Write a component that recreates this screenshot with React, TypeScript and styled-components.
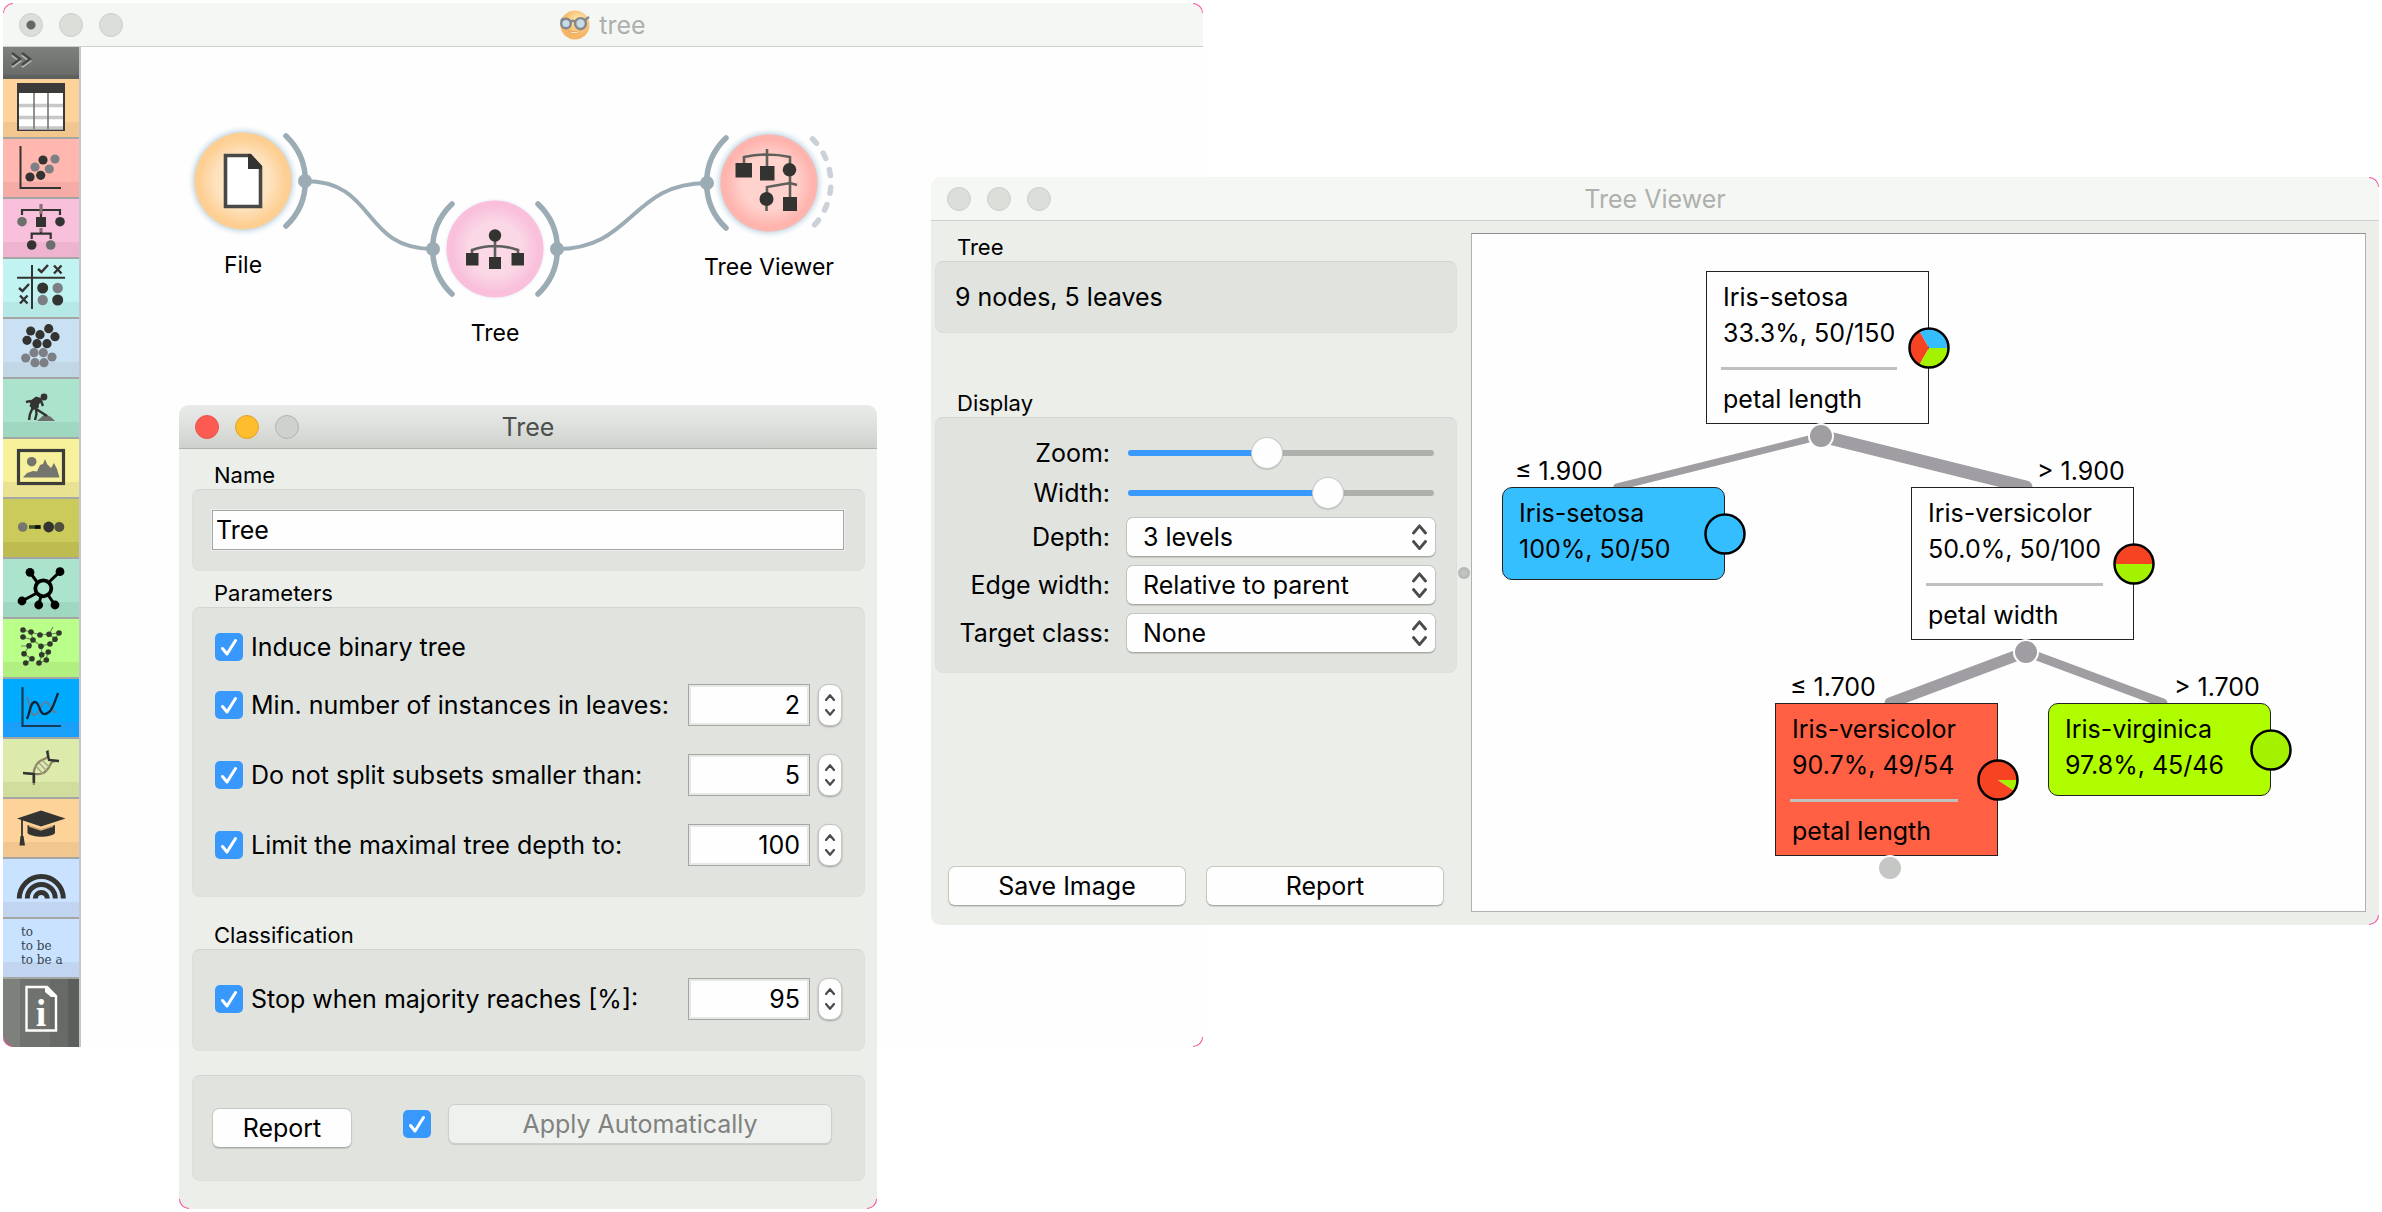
import React, { useState } from "react";
import styled, { createGlobalStyle } from "styled-components";

const GlobalStyle = createGlobalStyle`
  *, *::before, *::after { box-sizing: border-box; }
  body {
    margin: 0;
    background: #fff;
    color: #000;
    font-family: Inter, "Liberation Sans", sans-serif;
    font-size: 25px;
    line-height: 30px;
  }
  button, input, select { font: inherit; color: inherit; margin: 0; }
`;

const ink = "#333432";
const grey = "#7c8084";
const wire = "#9cacb4";

/* ---------- window chrome ---------- */

const Desktop = styled.main`
  position: relative;
  min-height: 100vh;
  overflow: hidden;
`;

const Window = styled.section<{ $left: number; $top: number; $width?: number; $fill?: string }>`
  position: absolute;
  left: ${(p) => p.$left}px;
  top: ${(p) => p.$top}px;
  ${(p) => (p.$width ? `width: ${p.$width}px;` : "right: 3px;")}
  display: flex;
  flex-direction: column;
  border-radius: 10px;
  background: ${(p) => p.$fill ?? "#ebeee9"};
`;

const Corner = styled.span<{ $v: "top" | "bottom"; $h: "left" | "right" }>`
  position: absolute;
  width: 10px;
  height: 10px;
  pointer-events: none;
  ${(p) => p.$v}: 0;
  ${(p) => p.$h}: 0;
  border-${(p) => p.$v}: 1px solid #f2559d;
  border-${(p) => p.$h}: 1px solid #f2559d;
  border-${(p) => p.$v}-${(p) => p.$h}-radius: 10px;
`;

const TitleBar = styled.header<{ $active?: boolean }>`
  display: grid;
  grid-template-columns: 1fr auto 1fr;
  align-items: center;
  height: 44px;
  padding: 0 16px;
  border-radius: 10px 10px 0 0;
  border-bottom: 1px solid ${(p) => (p.$active ? "#b0b2af" : "#cdd0cd")};
  background: ${(p) =>
    p.$active ? "linear-gradient(#e9ebe8, #dfe1de 45%, #cfd1cd)" : "#f5f7f4"};
`;

const Lights = styled.div`
  display: flex;
  gap: 16px;
`;

const Light = styled.button<{ $fill?: string; $edge?: string; $dot?: boolean }>`
  width: 24px;
  height: 24px;
  padding: 0;
  border-radius: 50%;
  border: 1px solid ${(p) => p.$edge ?? "#cccecb"};
  background: ${(p) =>
    p.$dot
      ? "radial-gradient(circle, #666865 0 4px, #dcdeda 5px)"
      : p.$fill ?? "#dcdeda"};
`;

const WindowTitle = styled.h1<{ $active?: boolean }>`
  display: flex;
  align-items: center;
  gap: 9px;
  margin: 0;
  font-size: 25px;
  font-weight: 400;
  line-height: 30px;
  color: ${(p) => (p.$active ? "#4d4f4c" : "#aeb0ad")};
`;

/* ---------- form parts ---------- */

const GroupTitle = styled.h2<{ $gap?: number }>`
  margin: ${(p) => p.$gap ?? 0}px 0 0 22px;
  font-size: 22px;
  font-weight: 400;
  line-height: 28px;
`;

const GroupBox = styled.div<{ $pad: string; $gap?: number }>`
  margin-top: ${(p) => p.$gap ?? 0}px;
  padding: ${(p) => p.$pad};
  border: 1px solid #dddfdb;
  border-top-color: #d2d4d1;
  border-radius: 8px;
  background: #e1e3df;
`;

const PushButton = styled.button`
  height: 40px;
  padding: 0 20px;
  border: 1px solid #c6c8c5;
  border-bottom-color: #a8aaa7;
  border-radius: 7px;
  background: #fefefe;
  box-shadow: 0 1px 1px rgba(0, 0, 0, 0.12);
  line-height: 30px;
  &:disabled {
    color: #80827f;
    background: #eff1ee;
    border-color: #cdcfcc;
  }
`;

const Tick = styled.input.attrs({ type: "checkbox" })`
  appearance: none;
  flex: none;
  width: 28px;
  height: 28px;
  border-radius: 5px;
  border: 1px solid #a9aba8;
  background: #fff;
  &:checked {
    border: none;
    background: #3898fb
      url("data:image/svg+xml,%3Csvg xmlns='http://www.w3.org/2000/svg' viewBox='0 0 28 28' fill='none' stroke='white' stroke-width='3' stroke-linecap='round' stroke-linejoin='round'%3E%3Cpath d='M7.500 15.500 12 21 20.500 7.500'/%3E%3C/svg%3E");
  }
`;

const TickLabel = styled.label`
  display: flex;
  align-items: center;
  gap: 8px;
  flex: 1;
`;

const Row = styled.div<{ $after?: number }>`
  display: flex;
  align-items: center;
  height: 42px;
  margin-bottom: ${(p) => p.$after ?? 0}px;
`;

const TextBox = styled.input`
  display: block;
  width: 100%;
  height: 40px;
  padding: 0 3px;
  border: 1px solid #a4a6a3;
  outline: 1px solid #eceeeb;
  background: #fefefe;
`;

const NumberBox = styled.input`
  width: 122px;
  height: 42px;
  margin-right: 8px;
  padding: 0 9px;
  border: 1px solid #a4a6a3;
  box-shadow: inset 0 0 0 2px #e6e8e5;
  background: #fefefe;
  text-align: right;
`;

const Stepper = styled.div`
  display: flex;
  flex-direction: column;
  width: 24px;
  height: 42px;
  padding: 5px 0;
  border: 1px solid #c3c5c2;
  border-radius: 10px;
  background: #fefefe;
  box-shadow: 0 1px 2px rgba(0, 0, 0, 0.3);
`;

const StepButton = styled.button`
  display: grid;
  place-items: center;
  flex: 1;
  padding: 0;
  border: 0;
  background: none;
`;

const ActionRow = styled.div`
  display: flex;
  align-items: flex-start;
  height: 44px;
`;

const ReportButton = styled(PushButton)`
  align-self: flex-end;
  width: 140px;
  margin-right: 51px;
`;

const ApplyGroup = styled.div`
  display: flex;
  align-items: center;
  gap: 17px;
  flex: 1;
`;

const ApplyButton = styled(PushButton)`
  flex: 1;
`;

function Chevron({ down, w = 10 }: { down?: boolean; w?: number }) {
  return (
    <svg width={w} height={w * 0.7} viewBox="0 0 10 7" aria-hidden="true">
      <path
        d={down ? "M1 1 5 5.800 9 1" : "M1 6 5 1.200 9 6"}
        fill="none"
        stroke="#4a4c4a"
        strokeWidth={w > 12 ? 1.9 : 2.2}
        strokeLinecap="round"
        strokeLinejoin="round"
      />
    </svg>
  );
}

function SpinRow({ label, value, after }: { label: string; value: number; after?: number }) {
  const [n, setN] = useState(value);
  const [on, setOn] = useState(true);
  return (
    <Row $after={after}>
      <TickLabel>
        <Tick checked={on} onChange={() => setOn(!on)} />
        {label}
      </TickLabel>
      <NumberBox
        aria-label={label}
        inputMode="numeric"
        value={n}
        onChange={(e) => setN(Number(e.target.value) || 0)}
      />
      <Stepper>
        <StepButton aria-label="Increase" onClick={() => setN(n + 1)}>
          <Chevron />
        </StepButton>
        <StepButton aria-label="Decrease" onClick={() => setN(n - 1)}>
          <Chevron down />
        </StepButton>
      </Stepper>
    </Row>
  );
}

/* ---------- tree settings dialog ---------- */

const DialogBody = styled.div`
  padding: 12px 12px 28px 13px;
`;

function TreeDialog() {
  return (
    <Window $left={179} $top={405} $width={698}>
      <TitleBar $active>
        <Lights>
          <Light aria-label="Close" $fill="#fc5b52" $edge="#e9564e" />
          <Light aria-label="Minimize" $fill="#fdbd2d" $edge="#dfa32b" />
          <Light aria-label="Zoom" $fill="#cfd1ce" $edge="#b2b4b1" />
        </Lights>
        <WindowTitle $active>Tree</WindowTitle>
      </TitleBar>
      <DialogBody>
        <GroupTitle>Name</GroupTitle>
        <GroupBox $pad="20px 20px 20px 19px">
          <TextBox aria-label="Name" defaultValue="Tree" />
        </GroupBox>
        <GroupTitle $gap={8}>Parameters</GroupTitle>
        <GroupBox $pad="18px 22px 30px">
          <Row $after={16}>
            <TickLabel>
              <Tick defaultChecked />
              Induce binary tree
            </TickLabel>
          </Row>
          <SpinRow label="Min. number of instances in leaves:" value={2} after={28} />
          <SpinRow label="Do not split subsets smaller than:" value={5} after={28} />
          <SpinRow label="Limit the maximal tree depth to:" value={100} />
        </GroupBox>
        <GroupTitle $gap={24}>Classification</GroupTitle>
        <GroupBox $pad="28px 22px 30px">
          <SpinRow label="Stop when majority reaches [%]:" value={95} />
        </GroupBox>
        <GroupBox $pad="28px 32px 32px 19px" $gap={24}>
          <ActionRow>
            <ReportButton>Report</ReportButton>
            <ApplyGroup>
              <Tick aria-label="Apply Automatically" defaultChecked />
              <ApplyButton disabled>Apply Automatically</ApplyButton>
            </ApplyGroup>
          </ActionRow>
        </GroupBox>
      </DialogBody>
      <Corner $v="bottom" $h="left" />
      <Corner $v="bottom" $h="right" />
    </Window>
  );
}

/* ---------- toolbox ---------- */

const MainBody = styled.div`
  display: flex;
`;

const Toolbox = styled.nav`
  width: 78px;
  border-right: 2px solid #c3c6cf;
  border-bottom-left-radius: 10px;
  overflow: hidden;
`;

const ToolboxHeader = styled.button`
  display: block;
  width: 100%;
  height: 32px;
  padding: 5px 0 11px 7px;
  border: 0;
  background: linear-gradient(#7e807d, #6b6d6a 85%, #5f615e 90%);
  text-align: left;
  svg { display: block; }
`;

const Category = styled.button<{ $top: string; $low: string }>`
  display: block;
  width: 100%;
  height: 60px;
  padding: 0;
  border: 0;
  border-bottom: 2px solid #a4a6a4;
  background: linear-gradient(${(p) => p.$top} 0 74%, ${(p) => p.$low} 74%);
  svg { display: block; }
`;

const InfoCategory = styled(Category)`
  height: 68px;
  border-bottom: 0;
  background: linear-gradient(90deg, #7e807c 0 22%, #70726f 22% 62%, #686a67 62% 86%, #5d5f5c 86%);
`;

const Ngrams = styled.span`
  display: block;
  height: 58px;
  padding: 6px 0 0 18px;
  color: #36434d;
  font-family: "DejaVu Serif", serif;
  font-size: 12px;
  line-height: 14px;
  text-align: left;
  white-space: pre;
`;

function Art({ children, h = 58 }: { children: React.ReactNode; h?: number }) {
  return (
    <svg width="76" height={h} viewBox={`0 0 76 ${h}`} aria-hidden="true">
      {children}
    </svg>
  );
}

function Dots({ pts, r, fill }: { pts: number[][]; r: number; fill: string }) {
  return (
    <g fill={fill}>
      {pts.map(([x, y]) => (
        <circle key={`${x}-${y}`} cx={x} cy={y} r={r} />
      ))}
    </g>
  );
}

const tableArt = (
  <Art>
    <rect x="14" y="4" width="48" height="48" fill="#3a3b39" />
    <rect x="16" y="14" width="44" height="36" fill="#fff" />
    <path d="M16 26.500H60M16 38.500H60M16 49H60" stroke="#c8c8c8" strokeWidth="3.500" />
    <path d="M31 14V50M45 14V50" stroke="#767676" strokeWidth="1.600" />
  </Art>
);

const scatterArt = (
  <Art>
    <path d="M17.500 7V49H58" fill="none" stroke={ink} strokeWidth="2" />
    <Dots r={4.6} fill={grey} pts={[[52, 20], [32, 28], [46.3, 30]]} />
    <Dots r={4.6} fill={ink} pts={[[40, 21], [27, 38], [37.7, 36.3]]} />
  </Art>
);

const modelArt = (
  <Art>
    <path
      d="M19 16V11H57V16M38 5V18M28.700 40V34.700H47.700V40M38 29V34"
      fill="none"
      stroke={ink}
      strokeWidth="2.200"
    />
    <path d="M38 5V15M38 29V33" stroke="#8a7173" strokeWidth="3" />
    <rect x="33" y="18" width="10" height="10" fill={ink} />
    <Dots r={4.8} fill={ink} pts={[[57, 22.7], [28.7, 46]]} />
    <Dots r={4.8} fill="#6c6e6c" pts={[[19, 22.7], [47.7, 46]]} />
  </Art>
);

const evaluateArt = (
  <Art>
    <path d="M29 6V50M14 18.700H62" stroke={ink} strokeWidth="2" />
    <path
      d="M35 10 38.500 13 45 6M16 29 19.500 32 26 25M51 6.500 58.500 14.500M58.500 6.500 51 14.500M17 36.500 24.500 44.500M24.500 36.500 17 44.500"
      fill="none"
      stroke={ink}
      strokeWidth="2.400"
    />
    <Dots r={5.5} fill={ink} pts={[[39.7, 29], [54.7, 41]]} />
    <Dots r={5.2} fill={grey} pts={[[54.7, 29], [39.7, 41]]} />
  </Art>
);

const unsupervisedArt = (
  <Art>
    <Dots r={4.6} fill={grey} pts={[[31, 33.7], [40.3, 33.7], [22.7, 39], [49, 38], [32, 43.7], [41, 43.7]]} />
    <Dots r={4.6} fill={ink} pts={[[27.7, 12], [45.7, 9.7], [37, 15.7], [52, 17.7], [24, 21.3], [34, 24.7], [44, 24.7]]} />
  </Art>
);

const diggerArt = (
  <Art>
    <path d="M34 42 42 35 48 38 52 42Z" fill="#6c6e6c" />
    <circle cx="41" cy="18" r="3.400" fill={ink} />
    <path d="M27 22 33 17.500 38 19 39.500 22 36 25 35.500 29 30 31 27.500 28Z" fill={ink} />
    <path
      d="M23 23 28 22M30 28 27 35 26 41M33 29 33.500 35 32 41M27 26 44 37M38 22 40 27"
      fill="none"
      stroke={ink}
      strokeWidth="2.400"
    />
  </Art>
);

const imageArt = (
  <Art>
    <rect x="15.500" y="11.500" width="45" height="33" fill="none" stroke="#3d3e39" strokeWidth="3.200" />
    <circle cx="28.700" cy="22.700" r="4.800" fill="#74756c" />
    <path
      d="M20 38.500 24 34 30 32 34 32.500 37 26 40 25 42 20 44 25 48 29 51 24 53 28 54 30 56.500 38.500Z"
      fill="#74756c"
    />
  </Art>
);

const timeArt = (
  <Art>
    <path d="M26 28H38" stroke="#39501f" strokeWidth="3.600" />
    <path d="M32 28H37" stroke="#111" strokeWidth="3.600" />
    <Dots r={4.8} fill="#77776f" pts={[[19.7, 28]]} />
    <Dots r={5.4} fill={ink} pts={[[45.7, 28]]} />
    <Dots r={5} fill="#50503c" pts={[[56.3, 28]]} />
  </Art>
);

const hubArt = (
  <Art>
    <circle cx="40.300" cy="29.300" r="8" fill="none" stroke="#000" strokeWidth="3.800" />
    <path
      d="M34 23 27 13.300M46 23 57 12.700M34 34 19 42M38 37 35.700 46M45 36 52 46"
      stroke="#000"
      strokeWidth="3"
    />
    <Dots r={4.4} fill="#000" pts={[[27, 13.3], [57, 12.7], [19, 42], [35.7, 46], [52, 46]]} />
  </Art>
);

const textNetArt = (
  <Art>
    <path
      d="M20 11 28 13 37 16 46 15 56 14 52 20 47 25 38 27 30 21 20 18M28 13 30 21 26 27 21 35 29 40 23 44M38 27 39 36 36 44 43 41 45 33 39 36M52 20 46 15 50 8M18 27H26"
      fill="none"
      stroke="#6d8c58"
      strokeWidth="1.100"
    />
    <Dots
      r={2.8}
      fill="#31392c"
      pts={[
        [20, 11], [28, 13], [20, 18], [30, 21], [37, 16], [46, 15.3], [56, 14], [52, 20.3], [26, 26.7],
        [38, 27.3], [47, 25], [21, 34.7], [29, 39.7], [38.7, 35.7], [45.3, 33], [22.7, 44], [36, 44], [43.3, 41],
      ]}
    />
  </Art>
);

const spectraArt = (
  <Art>
    <path d="M19.500 8V47H58" fill="none" stroke="#123c58" strokeWidth="2.200" />
    <path
      d="M24 18C27 24 27 37 32 36S38 23 43 23 48 35 54 33"
      fill="none"
      stroke="#55829f"
      strokeWidth="2"
    />
    <path
      d="M24 40C27 34 27 23 32 23S36 36 42 35 50 28 55 14"
      fill="none"
      stroke="#0c2537"
      strokeWidth="2.300"
    />
  </Art>
);

const dnaArt = (
  <Art>
    <path
      d="M31 46C29 36 31 24 39 21S45 17 45 11M20 34C30 34 38 38 44 31S45 22 56 22"
      fill="none"
      stroke="#8c8463"
      strokeWidth="2.200"
    />
    <path d="M20 34 31 35 31 44M44 12 46 21 56 22" fill="none" stroke={ink} strokeWidth="2.400" />
    <path d="M33 27 40 35M36 24 44 32M40 22 46 28" stroke="#a5a98b" strokeWidth="1.500" />
  </Art>
);

const capArt = (
  <Art>
    <path d="M14 19.500 38 11.500 62.500 19.500 38 27.500Z" fill={ink} />
    <path d="M24.500 26 38 30.500 52 26V34C48 39 29 39 24.500 34Z" fill={ink} />
    <path d="M19 21V38" stroke={ink} strokeWidth="1.800" />
    <path d="M17.500 37H20.500L22 46.500H16.500Z" fill={ink} />
    <path d="M26 27 38 31 50 27" fill="none" stroke="#d7a873" strokeWidth="1.400" />
  </Art>
);

const rainbowArt = (
  <Art>
    <g fill="none" stroke={ink} strokeWidth="5">
      <path d="M16.300 39.500A22 22 0 0 1 60.300 39.500" />
      <path d="M24.300 39.500A14 14 0 0 1 52.300 39.500" />
      <path d="M32.300 39.500A6 6 0 0 1 44.300 39.500" />
    </g>
  </Art>
);

const InfoMark = styled.text`
  font-family: "Liberation Serif", serif;
  font-size: 38px;
  font-weight: 700;
  fill: #fff;
  text-anchor: middle;
`;

const infoArt = (
  <Art h={68}>
    <path d="M23.500 8H44L53 17V51.500H23.500Z" fill="none" stroke="#fff" strokeWidth="2.400" />
    <path d="M42 8H44L53.500 18H48L42 13Z" fill="#fff" />
    <InfoMark x="38" y="47">i</InfoMark>
  </Art>
);

const categories: { name: string; top: string; low: string; art: React.ReactNode }[] = [
  { name: "Data", top: "#fdd39a", low: "#f2c68f", art: tableArt },
  { name: "Visualize", top: "#ffb7b0", low: "#f5aca6", art: scatterArt },
  { name: "Model", top: "#f9c0dc", low: "#edb3cf", art: modelArt },
  { name: "Evaluate", top: "#c1f3f2", low: "#b6e9e6", art: evaluateArt },
  { name: "Unsupervised", top: "#cae1f4", low: "#c1d7e6", art: unsupervisedArt },
  { name: "Educational tools", top: "#abe3cd", low: "#a0d7c0", art: diggerArt },
  { name: "Image Analytics", top: "#f8f19c", low: "#eae293", art: imageArt },
  { name: "Time Series", top: "#cbcb5b", low: "#bebc51", art: timeArt },
  { name: "Network", top: "#abe3cd", low: "#a0d7c0", art: hubArt },
  { name: "Geo", top: "#bbff8b", low: "#b1ef80", art: textNetArt },
  { name: "Spectroscopy", top: "#00abff", low: "#1a9ffa", art: spectraArt },
  { name: "Bioinformatics", top: "#dcebab", low: "#d1dd9d", art: dnaArt },
  { name: "Educational", top: "#fdd39a", low: "#f2c68f", art: capArt },
  { name: "Spectra", top: "#c8e2ff", low: "#c2d5f0", art: rainbowArt },
  {
    name: "Text Mining",
    top: "#c8e2ff",
    low: "#c2d5f0",
    art: <Ngrams>{"to\nto be\nto be a"}</Ngrams>,
  },
];

/* ---------- workflow canvas ---------- */

const Canvas = styled.div`
  position: relative;
  flex: 1;
  background: #fefefe;
  border-bottom-right-radius: 10px;
`;

const Wires = styled.svg`
  position: absolute;
  inset: 0;
  width: 100%;
  height: 100%;
`;

const Widget = styled.div<{ $x: number; $y: number }>`
  position: absolute;
  left: ${(p) => p.$x - 80}px;
  top: ${(p) => p.$y - 70}px;
  width: 160px;
  display: flex;
  flex-direction: column;
  align-items: center;
  font-size: 23px;
  line-height: 28px;
`;

function Disc({
  id, mid, edge, glow, input, output, children,
}: {
  id: string; mid: string; edge: string; glow?: boolean;
  input?: boolean; output?: "solid" | "dashed"; children: React.ReactNode;
}) {
  return (
    <svg width="140" height="140" viewBox="-70 -70 140 140" aria-hidden="true">
      <defs>
        <radialGradient id={id}>
          <stop offset="0.550" stopColor={mid} />
          <stop offset="0.900" stopColor={edge} />
        </radialGradient>
        <radialGradient id={`${id}-glow`}>
          <stop offset="0.840" stopColor="#b9cfdd" />
          <stop offset="1" stopColor="#f2f7fa" stopOpacity="0" />
        </radialGradient>
      </defs>
      <circle r={glow ? 56 : 52} fill={`url(#${id}-glow)`} />
      <circle r="48.500" fill={`url(#${id})`} />
      {input && (
        <>
          <path d="M-43 -45A62 62 0 0 0 -43 45" fill="none" stroke={wire} strokeWidth="5.500" strokeLinecap="round" />
          <circle cx="-62" r="7" fill={wire} />
        </>
      )}
      {output === "solid" && (
        <>
          <path d="M43 -45A62 62 0 0 1 43 45" fill="none" stroke={wire} strokeWidth="5.500" strokeLinecap="round" />
          <circle cx="62" r="7" fill={wire} />
        </>
      )}
      {output === "dashed" && (
        <path
          d="M43.500 -44A62 62 0 0 1 43.500 44"
          fill="none"
          stroke="#cbd1d8"
          strokeWidth="5.500"
          strokeLinecap="round"
          strokeDasharray="6 11.700"
        />
      )}
      {children}
    </svg>
  );
}

function OrangeLogo() {
  return (
    <svg width="30" height="30" viewBox="0 0 30 30" aria-hidden="true">
      <defs>
        <radialGradient id="face" cx="0.600" cy="0.350">
          <stop offset="0.200" stopColor="#fde3a4" />
          <stop offset="1" stopColor="#f5b566" />
        </radialGradient>
      </defs>
      <circle cx="15" cy="15" r="14.500" fill="url(#face)" />
      <path d="M8 21Q15 27 22 20Q15 23 8 21Z" fill="#fff3d0" stroke="#e7a95c" />
      <g fill="#c5dbe8" stroke="#85878c" strokeWidth="2.400">
        <circle cx="6" cy="13.500" r="4.800" />
        <circle cx="20.500" cy="13.500" r="5.400" />
      </g>
      <path d="M10.500 12Q13 9.500 15.500 12M25 10 29 7M1 11 3 8" fill="none" stroke="#85878c" strokeWidth="2.200" />
    </svg>
  );
}

function MainWindow() {
  return (
    <Window $left={3} $top={3} $width={1200} $fill="#fefefe">
      <TitleBar>
        <Lights>
          <Light aria-label="Close" $dot />
          <Light aria-label="Minimize" />
          <Light aria-label="Zoom" />
        </Lights>
        <WindowTitle>
          <OrangeLogo />
          tree
        </WindowTitle>
      </TitleBar>
      <MainBody>
        <Toolbox>
          <ToolboxHeader aria-label="Expand toolbox">
            <svg width="24" height="16" viewBox="0 0 24 16" fill="none" aria-hidden="true">
              <path d="M2 3 10 9 2 15M12 3 20 9 12 15" stroke="#b5b7b4" strokeWidth="2.400" />
              <path d="M2 1 10 7 2 13M12 1 20 7 12 13" stroke="#454744" strokeWidth="2.400" />
            </svg>
          </ToolboxHeader>
          {categories.map((c) => (
            <Category key={c.name} aria-label={c.name} $top={c.top} $low={c.low}>
              {c.art}
            </Category>
          ))}
          <InfoCategory aria-label="Prototypes" $top="#70726f" $low="#70726f">
            {infoArt}
          </InfoCategory>
        </Toolbox>
        <Canvas>
          <Wires aria-hidden="true">
            <g fill="none" stroke={wire} strokeWidth="4">
              <path d="M224 134C296 134 280 202 352 202" />
              <path d="M476 202C552 202 550 136 626 136" />
            </g>
          </Wires>
          <Widget $x={162} $y={134}>
            <Disc id="file" mid="#fee3c1" edge="#fdcf92" glow output="solid">
              <path d="M-17.500 -25.500H7L17.500 -14V25.500H-17.500Z" fill="#fff" stroke="#484946" strokeWidth="3.600" />
              <path d="M5 -27H8L19 -15V-12H5Z" fill={ink} />
            </Disc>
            File
          </Widget>
          <Widget $x={414} $y={202}>
            <Disc id="tree" mid="#fad8e6" edge="#f9bfdb" input output="solid">
              <path d="M-23 6V1Q0 -7 23 1V6M0 -10V10" fill="none" stroke="#5d5f5c" strokeWidth="2.600" />
              <circle cy="-13.500" r="6.200" fill={ink} />
              <path d="M-29 4H-16.500V16.500H-29ZM-6 8H6V20H-6ZM16.500 4H29V16.500H16.500Z" fill={ink} />
            </Disc>
            Tree
          </Widget>
          <Widget $x={688} $y={136}>
            <Disc id="viewer" mid="#ffd2cd" edge="#ffb4ae" glow input output="dashed">
              <path
                d="M-25 -18V-26Q-2 -31 21 -26V-14M-2 -34V-10M21 -10V16M-2 12V4L21 0 28 2M-2.500 20V28"
                fill="none"
                stroke="#5f5e59"
                strokeWidth="2.600"
              />
              <path d="M-33.500 -20H-17V-5.500H-33.500ZM-9 -17H5.500V-2.500H-9ZM14 14H28V28H14Z" fill={ink} />
              <circle cx="20.500" cy="-13.300" r="6.800" fill={ink} />
              <circle cx="-2.500" cy="16" r="7" fill={ink} />
            </Disc>
            Tree Viewer
          </Widget>
        </Canvas>
      </MainBody>
      <Corner $v="top" $h="left" />
      <Corner $v="top" $h="right" />
      <Corner $v="bottom" $h="left" />
      <Corner $v="bottom" $h="right" />
    </Window>
  );
}

/* ---------- tree viewer ---------- */

const ViewerBody = styled.div`
  display: flex;
  padding: 12px 13px 13px 4px;
`;

const SidePanel = styled.div`
  display: flex;
  flex-direction: column;
  width: 522px;
`;

const Splitter = styled.div`
  display: grid;
  place-items: center;
  width: 14px;
  &::before {
    content: "";
    width: 12px;
    height: 12px;
    border-radius: 50%;
    background: radial-gradient(#c6c8c5, #acaeab);
  }
`;

const SliderRows = styled.div`
  display: grid;
  grid-template-columns: 1fr 310px;
  grid-auto-rows: 40px;
  column-gap: 16px;
  align-items: center;
  margin-bottom: 4px;
  label { text-align: right; }
`;

const SelectRows = styled(SliderRows)`
  row-gap: 8px;
  margin-bottom: 0;
`;

const Slider = styled.input.attrs({ type: "range" })<{ $at: number }>`
  appearance: none;
  width: 100%;
  height: 32px;
  padding: 0 2px;
  background: none;
  &::-webkit-slider-runnable-track {
    height: 6px;
    border-radius: 3px;
    background: linear-gradient(90deg, #3898fb ${(p) => p.$at}%, #aeb0ac ${(p) => p.$at}%);
  }
  &::-webkit-slider-thumb {
    appearance: none;
    width: 30px;
    height: 30px;
    margin-top: -12px;
    border-radius: 50%;
    background: #fefefe;
    box-shadow: 0 0 0 1px #c9cbc8, 0 1px 2px rgba(0, 0, 0, 0.45);
  }
`;

const SelectFrame = styled.div`
  position: relative;
`;

const Select = styled.select`
  appearance: none;
  display: block;
  width: 100%;
  height: 40px;
  padding: 0 40px 0 16px;
  border: 1px solid #c3c5c2;
  border-bottom-color: #a6a8a5;
  border-radius: 7px;
  background: #fefefe;
  box-shadow: 0 1px 1px rgba(0, 0, 0, 0.12);
`;

const SelectArrows = styled.span`
  position: absolute;
  top: 0;
  right: 9px;
  height: 100%;
  display: flex;
  flex-direction: column;
  justify-content: center;
  gap: 5px;
  pointer-events: none;
  svg { display: block; }
`;

const ButtonBar = styled.div`
  display: grid;
  grid-template-columns: 1fr 1fr;
  gap: 20px;
  margin-top: auto;
  padding: 0 13px 6px;
`;

const Scene = styled.div`
  position: relative;
  flex: 1;
  height: 679px;
  border: 1px solid #b0b2af;
  border-top-color: #8e908d;
  background: #fefefe;
`;

const Edges = styled.svg`
  position: absolute;
  inset: 0;
  width: 100%;
  height: 100%;
`;

const TreeNode = styled.div<{ $x: number; $y: number; $fill: string; $leaf?: boolean }>`
  position: absolute;
  left: ${(p) => p.$x}px;
  top: ${(p) => p.$y}px;
  width: 223px;
  height: ${(p) => (p.$leaf ? 93 : 153)}px;
  padding: 7px 0 0 14px;
  border: 1px solid #222;
  border-radius: ${(p) => (p.$leaf ? 10 : 0)}px;
  background: ${(p) => p.$fill};
`;

const NodeText = styled.div`
  width: fit-content;
  line-height: 36px;
  white-space: nowrap;
  p { margin: 0; padding: 0 2px; }
  hr { margin: 16px 0 11px; border: 0; border-top: 3px solid #bfc1be; }
`;

const PieSpot = styled.svg`
  position: absolute;
  right: -22px;
  top: calc(50% - 21px);
`;

const EdgeLabel = styled.span<{ $x: number; $y: number }>`
  position: absolute;
  left: ${(p) => p.$x}px;
  top: ${(p) => p.$y}px;
  line-height: 28px;
  white-space: nowrap;
`;

const blue = "#34bdff";
const red = "#f64423";
const green = "#a4f200";

/* Slices run counter-clockwise from three o'clock. */
function Pie({ slices }: { slices: [string, number][] }) {
  let at = 0;
  return (
    <PieSpot width="42" height="42" viewBox="-21 -21 42 42" aria-hidden="true">
      {slices.map(([fill, share]) => {
        if (share === 1) return <circle key={fill} r="19.500" fill={fill} />;
        const a = at * 2 * Math.PI;
        at += share;
        const b = at * 2 * Math.PI;
        const p = (t: number) => `${19.5 * Math.cos(t)} ${-19.5 * Math.sin(t)}`;
        return (
          <path key={fill} fill={fill} d={`M0 0L${p(a)}A19.5 19.5 0 ${share > 0.5 ? 1 : 0} 0 ${p(b)}Z`} />
        );
      })}
      <circle r="19.500" fill="none" stroke="#000" strokeWidth="2.500" />
    </PieSpot>
  );
}

type Item = {
  x: number; y: number; fill: string; cls: string; stats: string;
  split?: string; slices: [string, number][];
};

const items: Item[] = [
  { x: 234, y: 37, fill: "#fefefe", cls: "Iris-setosa", stats: "33.3%, 50/150", split: "petal length", slices: [[blue, 1 / 3], [red, 1 / 3], [green, 1 / 3]] },
  { x: 30, y: 253, fill: "#36bfff", cls: "Iris-setosa", stats: "100%, 50/50", slices: [[blue, 1]] },
  { x: 439, y: 253, fill: "#fefefe", cls: "Iris-versicolor", stats: "50.0%, 50/100", split: "petal width", slices: [[red, 0.5], [green, 0.5]] },
  { x: 303, y: 469, fill: "#ff5f42", cls: "Iris-versicolor", stats: "90.7%, 49/54", split: "petal length", slices: [[red, 0.907], [green, 0.093]] },
  { x: 576, y: 469, fill: "#b0fd00", cls: "Iris-virginica", stats: "97.8%, 45/46", slices: [[green, 1]] },
];

const links = [
  { from: 0, to: 1, w: 7, text: "≤ 1.900", dx: 13 },
  { from: 0, to: 2, w: 13, text: "> 1.900", dx: 126 },
  { from: 2, to: 3, w: 11, text: "≤ 1.700", dx: 15 },
  { from: 2, to: 4, w: 9, text: "> 1.700", dx: 126 },
];

const stem = 115;

function TreeScene() {
  return (
    <Scene>
      <Edges aria-hidden="true">
        {links.map((l) => (
          <line
            key={l.text}
            x1={items[l.from].x + stem}
            y1={items[l.from].y + 165}
            x2={items[l.to].x + stem}
            y2={items[l.to].y}
            stroke="#a09ea3"
            strokeWidth={l.w}
            strokeLinecap="round"
          />
        ))}
      </Edges>
      {links.map((l) => (
        <EdgeLabel key={l.text} $x={items[l.to].x + l.dx} $y={items[l.to].y - 30}>
          {l.text}
        </EdgeLabel>
      ))}
      {items.map((n) => (
        <TreeNode key={`${n.x}-${n.y}`} $x={n.x} $y={n.y} $fill={n.fill} $leaf={!n.split}>
          <NodeText>
            <p>{n.cls}</p>
            <p>{n.stats}</p>
            {n.split && (
              <>
                <hr />
                <p>{n.split}</p>
              </>
            )}
          </NodeText>
          <Pie slices={n.slices} />
        </TreeNode>
      ))}
      <Edges aria-hidden="true" pointerEvents="none">
        {items
          .filter((n) => n.split)
          .map((n) => (
            <circle
              key={`${n.x}-${n.y}`}
              cx={n.x + stem}
              cy={n.y + 165}
              r="12"
              fill={n.y > 400 ? "#c5c7c5" : "#a09ea3"}
              stroke="#fefefe"
              strokeWidth="2"
            />
          ))}
      </Edges>
    </Scene>
  );
}

function SelectRow({ id, label, options }: { id: string; label: string; options: string[] }) {
  return (
    <>
      <label htmlFor={id}>{label}</label>
      <SelectFrame>
        <Select id={id}>
          {options.map((o) => (
            <option key={o}>{o}</option>
          ))}
        </Select>
        <SelectArrows>
          <Chevron w={15} />
          <Chevron w={15} down />
        </SelectArrows>
      </SelectFrame>
    </>
  );
}

function SliderRow({ id, label, start }: { id: string; label: string; start: number }) {
  const [v, setV] = useState(start);
  return (
    <>
      <label htmlFor={id}>{label}</label>
      <Slider id={id} value={v} $at={v} onChange={(e) => setV(Number(e.target.value))} />
    </>
  );
}

function TreeViewer() {
  return (
    <Window $left={931} $top={177}>
      <TitleBar>
        <Lights>
          <Light aria-label="Close" />
          <Light aria-label="Minimize" />
          <Light aria-label="Zoom" />
        </Lights>
        <WindowTitle>Tree Viewer</WindowTitle>
      </TitleBar>
      <ViewerBody>
        <SidePanel>
          <GroupTitle>Tree</GroupTitle>
          <GroupBox $pad="20px 20px 20px 19px">9 nodes, 5 leaves</GroupBox>
          <GroupTitle $gap={56}>Display</GroupTitle>
          <GroupBox $pad="15px 20px 19px">
            <SliderRows>
              <SliderRow id="zoom" label="Zoom:" start={45} />
              <SliderRow id="width" label="Width:" start={67} />
            </SliderRows>
            <SelectRows>
              <SelectRow id="depth" label="Depth:" options={["3 levels", "Unlimited", "2 levels", "4 levels"]} />
              <SelectRow id="edge" label="Edge width:" options={["Relative to parent", "Fixed", "Relative to root"]} />
              <SelectRow
                id="target"
                label="Target class:"
                options={["None", "Iris-setosa", "Iris-versicolor", "Iris-virginica"]}
              />
            </SelectRows>
          </GroupBox>
          <ButtonBar>
            <PushButton>Save Image</PushButton>
            <PushButton>Report</PushButton>
          </ButtonBar>
        </SidePanel>
        <Splitter />
        <TreeScene />
      </ViewerBody>
      <Corner $v="top" $h="right" />
      <Corner $v="bottom" $h="right" />
    </Window>
  );
}

export default function App() {
  return (
    <>
      <GlobalStyle />
      <Desktop>
        <MainWindow />
        <TreeViewer />
        <TreeDialog />
      </Desktop>
    </>
  );
}
